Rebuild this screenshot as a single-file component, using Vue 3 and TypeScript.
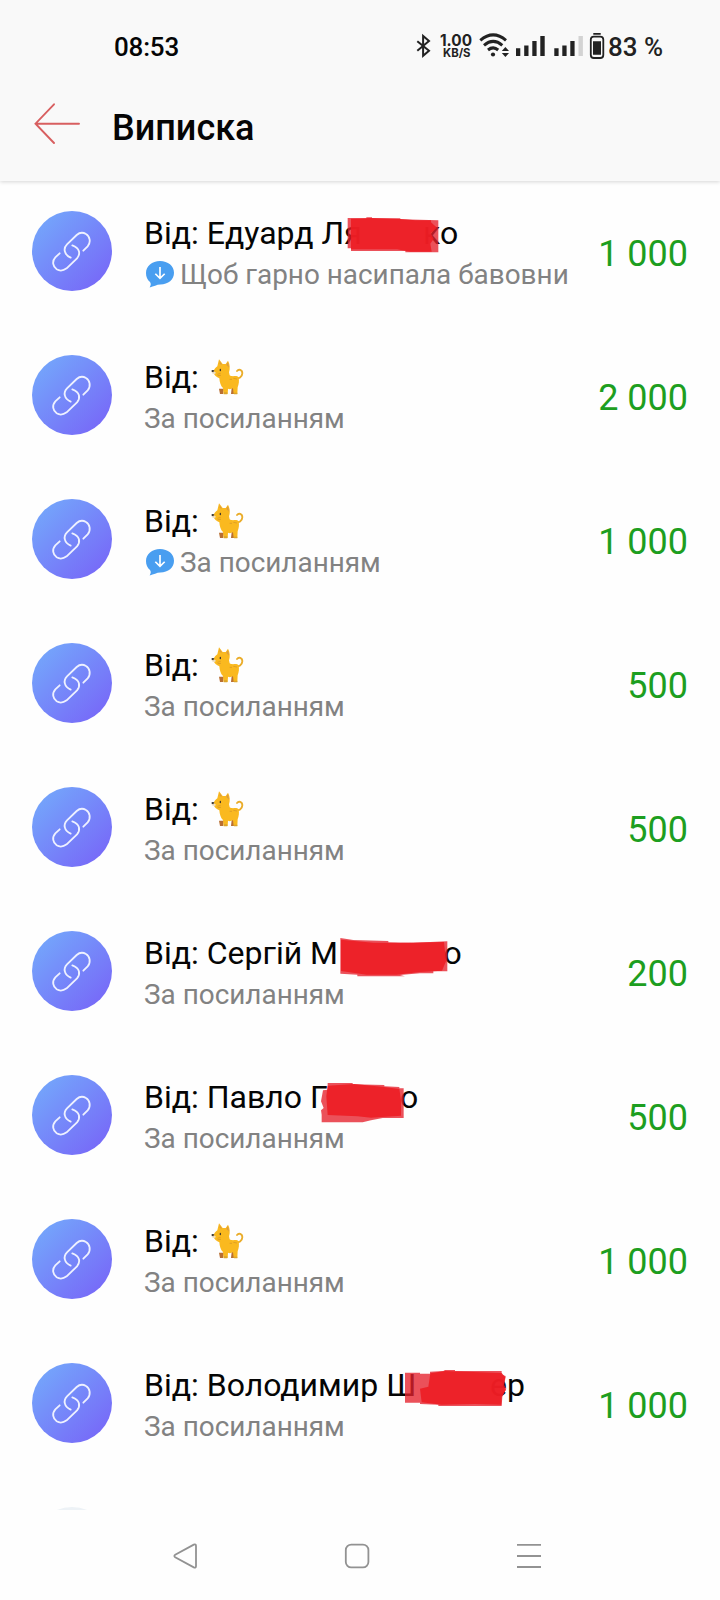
<script setup lang="ts">
interface Redaction {
  left: number
  top: number
  width: number
  height: number
  soft: string
  solid: string
}

interface Transfer {
  head: string
  tail?: string
  headWidth?: number
  cat?: boolean
  bubble?: boolean
  note: string
  amount: string
  redaction?: Redaction
}

const link = 'За посиланням'

const transfers: Transfer[] = [
  {
    head: 'Від: Едуард Ля', tail: 'ко', headWidth: 279, bubble: true,
    note: 'Щоб гарно насипала бавовни', amount: '1 000',
    redaction: {
      left: 202.5, top: 38, width: 92, height: 36,
      soft: '2,3 58,4 58,1 75,1 75,4 160,4 160,7 274,10 274,106 175,106 175,102 12,102 12,94 2,94',
      solid: '12,5 75,3 160,6 205,10 252,10 252,16 270,32 251,48 260,66 250,80 254,104 190,104 150,97 12,97',
    },
  },
  { head: 'Від:', cat: true, note: link, amount: '2 000' },
  { head: 'Від:', cat: true, bubble: true, note: link, amount: '1 000' },
  { head: 'Від:', cat: true, note: link, amount: '500' },
  { head: 'Від:', cat: true, note: link, amount: '500' },
  {
    head: 'Від: Сергій М', tail: 'о', headWidth: 299.5, note: link, amount: '200',
    redaction: {
      left: 195.5, top: 38.5, width: 108, height: 39,
      soft: '1,0 40,6 145,9 145,13 220,14 322,10 322,100 280,100 280,106 240,106 180,111 195,115 52,115 52,110 1,107',
      solid: '3,5 100,14 180,15 312,12 318,70 306,98 240,102 170,110 80,110 3,99',
    },
  },
  {
    head: 'Від: Павло Г', tail: 'о', headWidth: 256, note: link, amount: '500',
    redaction: {
      left: 176.5, top: 39.5, width: 83, height: 40,
      soft: '20,0 95,0 95,4 190,6 190,10 235,12 235,16 248,16 248,105 185,105 150,112 125,118 2,118 2,95 0,82 8,75 0,55 6,22 20,20',
      solid: '20,8 100,3 190,12 235,18 240,50 240,98 150,104 110,100 20,96 16,40',
    },
  },
  { head: 'Від:', cat: true, note: link, amount: '1 000' },
  {
    head: 'Від: Володимир Ш', tail: 'ер', headWidth: 346, note: link, amount: '1 000',
    redaction: {
      left: 261, top: 39, width: 102, height: 37,
      soft: '0,8 45,8 45,11 75,11 75,5 115,3 120,0 150,0 150,3 290,3 290,14 302,18 298,45 304,56 292,80 290,108 100,108 100,104 45,102 45,98 0,98',
      solid: '76,10 120,3 290,9 301,22 295,48 302,60 290,80 289,104 210,102 110,104 50,97 45,56 70,50',
    },
  },
]
</script>

<template>
  <div class="screen">
    <header class="header">
      <svg class="status" viewBox="400 20 300 60">
        <g class="ink">
          <path class="line" d="M417.3 41.2 L429 50.8 L423.1 55.8 V36 L429 41 L417.3 50.8" />
          <text class="speed" x="440" y="46" textLength="32" lengthAdjust="spacingAndGlyphs">1.00</text>
          <text class="unit" x="443" y="57.4" textLength="27.5" lengthAdjust="spacingAndGlyphs">KB/S</text>
          <path class="arc" d="M480.3 40.3 Q493.2 29.5 506 40.3 M484 45.3 Q493.2 37.5 502.3 45.3 M488 50 Q493.2 45.8 498.2 50" />
          <circle cx="493" cy="54.5" r="2.1" />
          <path d="M505.4 47 L509 51 H501.8Z M505.4 57 L501.8 53 H509Z" />
          <path d="M516 48.3h4.3v7.7H516z M524.2 45.6h4.3V56h-4.3z M532.3 41h4.3v15h-4.3z M540.3 36h4.4v20h-4.4z" />
          <path d="M554.3 48.3h4.3v7.7h-4.3z M562.3 45.6h4.3V56h-4.3z M570.3 41h4.3v15h-4.3z" />
          <path class="faint" d="M578.5 36h4.4v20h-4.4z" />
          <path d="M593.3 33h7.4v1.8h-7.4z M593 41.3h8v13.5h-8z" />
          <rect class="case" x="590.8" y="36.6" width="12.5" height="21.4" rx="3" />
        </g>
        <text class="percent" x="608" y="56" textLength="55" lengthAdjust="spacingAndGlyphs">83 %</text>
      </svg>
      <time class="clock">08:53</time>
      <div class="titlebar">
        <svg class="back" viewBox="0 0 46 42">
          <path d="M20 1.3 L1.5 20.7 L20 40 M1.5 20.7 H45" />
        </svg>
        <h1 class="title">Виписка</h1>
      </div>
    </header>

    <main class="list">
      <svg class="defs" width="0" height="0">
        <defs>
          <linearGradient id="disc" x1="0.12" y1="0.12" x2="0.86" y2="0.88">
            <stop offset="0" stop-color="#74a4fb" />
            <stop offset="1" stop-color="#776bf8" />
          </linearGradient>
        </defs>
      </svg>
      <article v-for="(item, i) in transfers" :key="i" class="row">
        <svg class="avatar" viewBox="36 45 240 240">
          <circle cx="156" cy="165" r="120" fill="url(#disc)" />
          <path class="chain" d="M190 164 L203 151 C214 139 209 120 198 114 C188 108 178 110 170 117 L141 145 C129 157 132 176 152 185" />
          <path class="chain" d="M119 172 L106 184 C95 196 99 213 110 220 C120 226 132 223 140 217 L171 187 C182 174 180 156 157 148" />
        </svg>
        <div class="details">
          <div class="name">
            <span class="head" :style="item.headWidth ? { width: item.headWidth + 'px' } : {}">{{ item.head }}</span>
            <span v-if="item.tail">{{ item.tail }}</span>
            <svg v-if="item.cat" class="cat" viewBox="240 55 105 114">
              <path d="M316 115 C326 119 337 111 337 101 C337 90 326 87 321 94" fill="none" stroke="#eaad2b" stroke-width="5.5" stroke-linecap="round" />
              <path d="M267 147 L270 163 H279 L282 147Z M305 145 L303 163 H312 L316 145Z" fill="#b96f32" />
              <path d="M262 80 L267 59 L278 73 L287 73 L294 63 C300 74 301 86 297 98 L299 107 C307 113 319 106 325 112 C329 123 326 134 323 143 L322 163 H311 L309 146 C302 149 298 149 294 147 L293 163 H281 L279 145 C272 139 269 128 268 116 C260 113 252 106 250 98 C252 88 257 84 262 80Z" fill="#fab91f" />
              <path d="M269 73 L269 64 L276 75Z M289 75 L294 67 L297 84Z" fill="#d89a45" />
              <path d="M244 94 Q251 93 258 99 Q254 106 246 101Z" fill="#eee0c9" />
              <path d="M245 91 L253 92 L250 98 L245 96Z" fill="#383431" />
              <ellipse cx="271" cy="91" rx="2.2" ry="4" fill="#41372c" />
              <path d="M262 104 L272 101 M263 108 L273 107 M299 119 L306 119 M310 116 L321 118" stroke="#d39327" stroke-width="2" />
              <path d="M281 158 H292 V164 H281Z M312 159 H322 V164 H312Z" fill="#dba52c" />
            </svg>
          </div>
          <div class="note">
            <svg v-if="item.bubble" class="bubble" viewBox="0 0 84 79">
              <path d="M42 0 C66 0 84 15 84 35 C84 56 67 70 43 70 C32 70 23 76 11 79 Q17 70 12 63 C4 56 0 47 0 36 C0 15 18 0 42 0Z" fill="#499ef0" />
              <path d="M42 18 V51 M28 38 L42 52 L56 38" fill="none" stroke="#fff" stroke-width="5" />
            </svg>
            <span>{{ item.note }}</span>
          </div>
        </div>
        <div class="amount">{{ item.amount }}</div>
        <svg
          v-if="item.redaction"
          class="redaction"
          :viewBox="`0 0 ${item.redaction.width * 3} ${item.redaction.height * 3}`"
          :style="{
            left: item.redaction.left + 144 + 'px',
            top: item.redaction.top + 'px',
            width: item.redaction.width + 'px',
            height: item.redaction.height + 'px',
          }"
        >
          <polygon :points="item.redaction.soft" fill="#e6202c" fill-opacity="0.78" />
          <polygon :points="item.redaction.solid" fill="#ed1d24" fill-opacity="0.9" />
        </svg>
      </article>
      <div class="peek"><div class="peek-disc"></div></div>
    </main>

    <nav class="nav">
      <svg viewBox="0 0 26 28"><path d="M21.8 2.6 L3.2 12.8 Q1.5 14 3.2 15.2 L21.8 25.4 Q24 26.3 24 24 V4 Q24 1.7 21.8 2.6Z" /></svg>
      <svg viewBox="0 0 26 28"><rect x="1.8" y="2.6" width="22.6" height="22.8" rx="5.5" /></svg>
      <svg viewBox="0 0 26 28"><path d="M1 2.8 H25 M1 14 H25 M1 25 H25" /></svg>
    </nav>
  </div>
</template>

<style>
body {
  margin: 0;
  background: #fefefe;
}
</style>

<style scoped>
.screen {
  position: relative;
  display: flex;
  flex-direction: column;
  width: 720px;
  height: 1600px;
  overflow: hidden;
  background: #fefefe;
  color: #050505;
  font-family: Roboto, "Noto Sans", sans-serif;
}
.header {
  position: relative;
  flex: none;
  box-sizing: border-box;
  height: 181px;
  padding-top: 27px;
  background: #f9f9f9;
  box-shadow: 0 1px 4px rgba(0, 0, 0, 0.16);
  z-index: 1;
}
.status {
  position: absolute;
  left: 400px;
  top: 20px;
  width: 300px;
  height: 60px;
}
.ink {
  fill: #222;
}
.line,
.arc,
.case {
  fill: none;
  stroke: #222;
}
.line {
  stroke-width: 2;
}
.arc {
  stroke-width: 3;
}
.case {
  stroke-width: 1.8;
}
.faint {
  fill: #d3d3d3;
}
.speed {
  font: 700 16px Inter, sans-serif;
}
.unit {
  font: 700 11.6px Inter, sans-serif;
}
.percent {
  font-size: 26px;
  font-weight: 500;
  fill: #222;
}
.clock {
  display: block;
  margin-left: 114px;
  font-size: 26px;
  line-height: 40px;
  font-weight: 500;
  letter-spacing: -0.2px;
}
.titlebar {
  display: flex;
  align-items: flex-start;
  margin-top: 36px;
  padding-left: 34px;
}
.back {
  width: 46px;
  height: 42px;
  fill: none;
  stroke: #d85f60;
  stroke-width: 1.9;
  stroke-linecap: round;
}
.title {
  margin: 5px 0 0 32px;
  font-size: 36px;
  line-height: 40px;
  font-weight: 500;
}
.list {
  flex: 1;
  margin-top: -2px;
  overflow: hidden;
}
.defs {
  display: block;
}
.row {
  position: relative;
  display: flex;
  align-items: flex-start;
  height: 144px;
  padding: 0 32px;
  box-sizing: border-box;
}
.avatar {
  flex: none;
  width: 80px;
  height: 80px;
  margin-top: 32px;
}
.chain {
  fill: none;
  stroke: #eef1ff;
  stroke-width: 5.5;
  stroke-linecap: round;
}
.details {
  flex: 1;
  margin: 35px 0 0 32px;
  white-space: nowrap;
}
.name {
  display: flex;
  height: 38px;
  font-size: 32px;
  line-height: 38px;
}
.head {
  flex: none;
}
.cat {
  width: 35px;
  height: 38px;
  margin: 0 0 0 11px;
}
.note {
  display: flex;
  font-size: 27.9px;
  line-height: 34px;
  margin-top: 6px;
  color: #828282;
}
.bubble {
  width: 28px;
  height: 26.5px;
  margin: 3px 6px 0 2px;
}
.amount {
  margin-top: 53px;
  font-size: 36px;
  line-height: 44px;
  color: #1d9e20;
}
.redaction {
  position: absolute;
}
.peek {
  height: 35px;
  overflow: hidden;
}
.peek-disc {
  width: 80px;
  height: 80px;
  margin: 32px 0 0 32px;
  border-radius: 50%;
  background: #edf2f6;
}
.nav {
  flex: none;
  display: flex;
  justify-content: center;
  gap: 146px;
  height: 90px;
  padding-top: 32px;
  margin-right: 7px;
  box-sizing: border-box;
}
.nav svg {
  width: 26px;
  height: 28px;
  fill: none;
  stroke: #929292;
  stroke-width: 1.8;
}
</style>
